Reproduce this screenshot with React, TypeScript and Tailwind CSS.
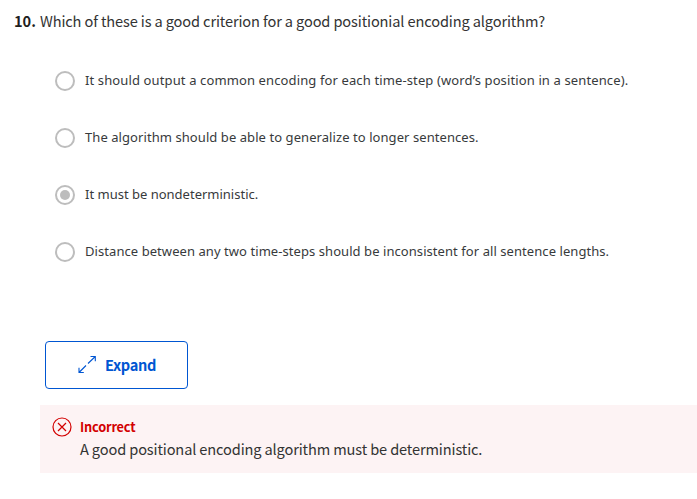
const sourceFont = "font-['Noto_Sans_CJK_SC',sans-serif]";

type Option = { text: string; tracking: string; selected?: boolean };

const options: Option[] = [
  { text: 'It should output a common encoding for each time-step (word’s position in a sentence).', tracking: 'tracking-[0.122px]' },
  { text: 'The algorithm should be able to generalize to longer sentences.', tracking: 'tracking-[0.07px]' },
  { text: 'It must be nondeterministic.', tracking: 'tracking-[0px]', selected: true },
  { text: 'Distance between any two time-steps should be inconsistent for all sentence lengths.', tracking: 'tracking-[0.065px]' },
];

function Radio({ selected }: { selected?: boolean }) {
  return (
    <span className="flex size-5 shrink-0 items-center justify-center rounded-full border-2 border-[#bdbdbd]">
      {selected && <span className="size-2.5 rounded-full bg-[#bdbdbd]" />}
    </span>
  );
}

export default function App() {
  return (
    <main className={`h-[499px] w-[697px] overflow-hidden bg-white text-[#1f1f1f] ${sourceFont}`}>
      <h1 className="flex h-[52px] items-start whitespace-nowrap pl-3.5 pt-[9px] text-[14.6px] leading-6 font-normal">
        <span className="w-[26px] font-bold">10.</span>
        <span className="tracking-[-0.13px] text-[#333]">Which of these is a good criterion for a good positionial encoding algorithm?</span>
      </h1>
      <ul className="pl-[55px]">
        {options.map((o) => (
          <li key={o.text} className="flex h-[57px] items-center gap-2.5">
            <Radio selected={o.selected} />
            <span className={`pb-0.5 whitespace-nowrap font-['Noto_Sans',sans-serif] text-[13px] leading-5 text-[#373a3c] ${o.tracking}`}>{o.text}</span>
          </li>
        ))}
      </ul>
      <button className="mt-[61px] ml-[45px] flex h-12 w-[143px] items-center rounded-[4px] border border-[#0056d2] pl-8 text-[14.6px] leading-6 font-bold text-[#0056d2]">
        <svg className="-mt-px" width="19" height="19" viewBox="0 0 19 19" fill="none" stroke="currentColor" strokeWidth="1.1">
          <path d="M10 8.5 17.3 1.5M12.5 1.5h4.8V6.3M8 10.5l-7 7M1 12.7v4.8H5.8" />
        </svg>
        <span className="ml-2 tracking-[-0.35px]">Expand</span>
      </button>
      <section className="mt-4 ml-10 flex h-[68px] bg-[#fdf3f4] pt-3 pl-3">
        <svg className="shrink-0" width="20" height="20" viewBox="0 0 20 20" fill="none" stroke="#d30001" strokeWidth="1.2">
          <circle cx="10" cy="10" r="9" />
          <path d="m6 6 8 8m0-8-8 8" />
        </svg>
        <div className="ml-2 whitespace-nowrap">
          <p className="text-[12.8px] leading-5 font-bold tracking-[-0.2px] text-[#d30001]">Incorrect</p>
          <p className="text-[14.6px] leading-6 tracking-[-0.135px] text-[#333]">A good positional encoding algorithm must be deterministic.</p>
        </div>
      </section>
    </main>
  );
}
